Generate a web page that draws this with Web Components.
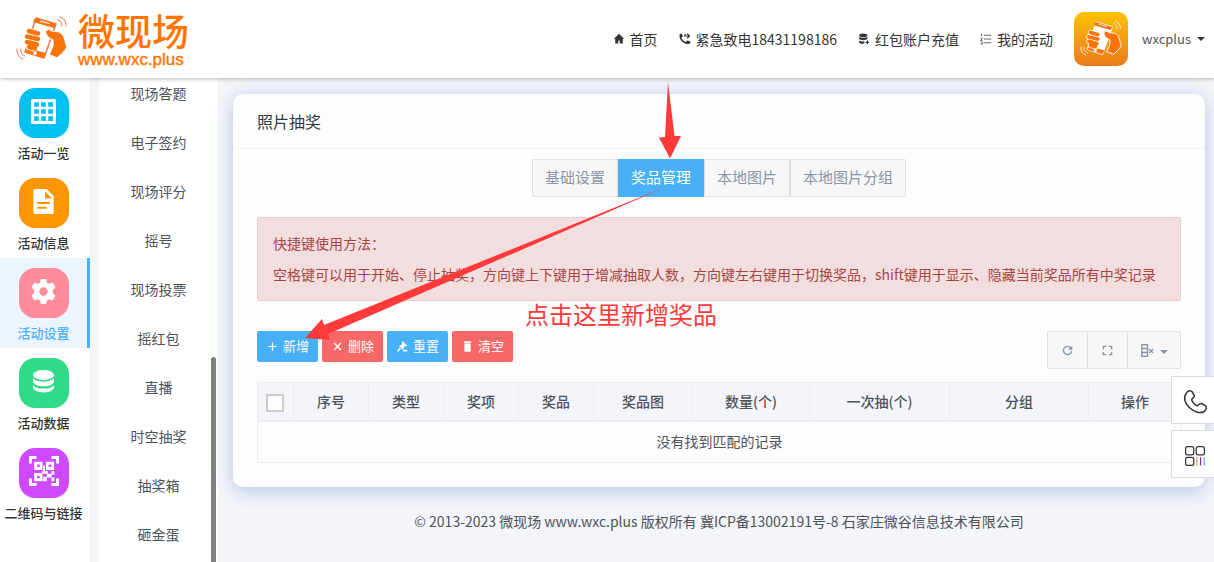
<!DOCTYPE html>
<html lang="zh-CN">
<head>
<meta charset="utf-8">
<title>照片抽奖</title>
<style>
  body { margin: 0; font: 14px/20px "Noto Sans CJK SC", sans-serif; color: #4d5259; background: #f4f5fa; }
</style>
</head>
<body>
<wxc-app></wxc-app>

<script>
const hand = (line, body, screen) => `
  <g stroke-linejoin="round" stroke-linecap="round">
    <path d="M20 2L40 8L28 42L9 36Z" fill="${screen}" stroke="${line}" stroke-width="1.400"/>
    <path d="M19 2L40 8L38 12L17 6Z" fill="${body}"/>
    <path d="M24 5L33 7.600" stroke="${screen}" stroke-width="1" fill="none"/>
    <path d="M11 32L30 37L28 42L9 36Z" fill="${body}"/>
    <circle cx="19" cy="37.300" r="1.800" fill="${screen}"/>
    <path d="M13 15L22 17.500M11 20.500L22 23M11 26L21 28.500M13 31L19 32.500" stroke="${screen}" stroke-width="6.400" fill="none"/>
    <path d="M13 15L22 17.500M11 20.500L22 23M11 26L21 28.500M13 31L19 32.500" stroke="${body}" stroke-width="4.600" fill="none"/>
    <path d="M30 18C28 14 32 12 36 15L43 16C49 18 49 26 51 32L46 38L41 42C37 40 35 39 33 39L37 30L37 24C34 23 32 22 30 18Z" fill="${body}" stroke="${screen}" stroke-width="1.200"/>
    <path d="M44 1C48 2 50 5 50 10M42 4C45 5 46 7 46 10M1 33C1 38 3 42 7 43M5 33C4 36 6 39 9 40" stroke="${line}" stroke-width="1" fill="none"/>
  </g>`;

const icons = {
  home: '<path d="M8 1L1 8h2v6h4v-4h2v4h4V8h2z"/>',
  call: '<path d="M1 1h3l1 4-2 1c1 3 3 5 6 6l2-2 4 1v3c-8 3-16-5-14-13z"/><path d="M7 4h7M11 1l3 3-3 3M8 1v3" fill="none" stroke="currentColor" stroke-width="1.500"/>',
  coins: '<ellipse cx="7" cy="3" rx="5.500" ry="2.500"/><path d="M1.500 5c2 2 9 2 11 0v3c-2 2-9 2-11 0zM1.500 10c2 1.500 5 1.500 7 1v3c-3 .5-7 0-7-1.500z"/><path d="M12.500 10v5M10 12.500h5" stroke="currentColor" stroke-width="1.500"/>',
  list: '<path d="M5 3h10M5 8h10M5 13h10M1 1.500h1v3M1 7h2l-2 3h2M1 12h2v3H1" fill="none" stroke="currentColor" stroke-width="1"/>',
  grid: '<path fill-rule="evenodd" d="M1 0h14q1 0 1 1v14q0 1-1 1H1q-1 0-1-1V1q0-1 1-1zM2 2v3h3V2zm4.500 0v3h3V2zM11 2v3h3V2zM2 6.500v3h3v-3zm4.500 0v3h3v-3zm4.500 0v3h3v-3zM2 11v3h3v-3zm4.500 0v3h3v-3zm4.500 0v3h3v-3z"/>',
  file: '<path fill-rule="evenodd" d="M3 0h7l4.500 4.500V15q0 1-1 1H3q-1.500 0-1.500-1V1q0-1 1.500-1zM9 1.500V6h4.500zM4 8.300v1.300h8V8.300zm0 3v1.300h6v-1.300z"/>',
  gear: '<path fill-rule="evenodd" d="M6.300 0h3.400l.5 2.300 1.300.8L13.800 2.300l1.900 3-1.700 1.700v2l1.700 1.700-1.900 3-2.300-.8-1.300.8-.5 2.300H6.300l-.5-2.300-1.300-.8-2.300.8-1.900-3L2 9V7L.3 5.300l1.900-3 2.300.8 1.300-.8zM8 5.300a2.700 2.700 0 1 0 0 5.400 2.700 2.700 0 0 0 0-5.400z"/>',
  data: '<ellipse cx="8" cy="3.800" rx="6.700" ry="3.200"/><path d="M1.300 5.500c1 3.400 12.400 3.400 13.400 0v2.800c-1 3.600-12.400 3.600-13.400 0zM1.300 10c1 3.400 12.400 3.400 13.400 0v2c-1 4-12.400 4-13.400 0z"/>',
  qr: '<path d="M.8 4V.8H4M12 .8h3.200V4M.8 12v3.200H4M12 15.200h3.200V12" fill="none" stroke="currentColor" stroke-width="1.600"/><path fill-rule="evenodd" d="M2.800 3h4.400v4.400H2.800zm1.500 1.500v1.400h1.400V4.500zM9 3h4.400v4.400H9zm1.500 1.500v1.400h1.400V4.500zM2.800 9h4.400v4.400H2.800zm1.500 1.500v1.400h1.400v-1.400zM7.500 5h1v3h-1zM7 8h3v1.500H7zM9.500 9.500h2.500v2H9.500zM12 8h1.500v2H12zM7.500 11h2v2.400h-2zM12 11.500h1.500v2H12z"/>',
  plus: '<path d="M8 2v12M2 8h12" stroke="currentColor" stroke-width="1.800"/>',
  close: '<path d="M3 3l10 10M13 3L3 13" stroke="currentColor" stroke-width="2"/>',
  gavel: '<path d="M8 0l7 7-2 1-1-1-3 3 1 1-1 2-6-6 1-1 1 .5L8 4 7 3z"/><path d="M5 10l-4 5M9 14h6" stroke="currentColor" stroke-width="2.500"/>',
  trash: '<path d="M3 1h10v1H3zM4 4h8v11H4z" stroke="currentColor"/>',
  refresh: '<path d="M13 4.500A6 6 0 1 0 14 9" fill="none" stroke="currentColor" stroke-width="2"/><path d="M15 1v6H9z"/>',
  full: '<path d="M2 6V2h4M10 2h4v4M14 10v4h-4M6 14H2v-4" fill="none" stroke="currentColor" stroke-width="2"/>',
  columns: '<path d="M1 1h7v14H1zM1 5.500h7M1 10.500h7M10 6l5 5M15 6l-5 5" fill="none" stroke="currentColor" stroke-width="1.700"/>',
  phone: '<path d="M2 2.500C3 .5 4.500 0 6 1l1.500 2.500C8 5 6 5.500 5.800 6.500 6 8 8 10 9.500 10.500 10.500 10 11 8.500 12.500 9l2.500 1.500c1.500 1.500 0 3-1 4C8 17.500-2 8 2 2.500z" fill="none" stroke="currentColor" stroke-width="1"/>',
  apps: '<rect x=".5" y=".5" width="6.500" height="6.500" rx="1.500" fill="none" stroke="currentColor"/><rect x="9" y=".5" width="6.500" height="6.500" rx="1.500" fill="none" stroke="currentColor"/><rect x=".5" y="9" width="6.500" height="6.500" rx="1.500" fill="none" stroke="currentColor"/><path d="M9.500 9v6.500" stroke="#d9a866"/><path d="M12.500 9v6.500" stroke="#803090"/><path d="M15.300 9v6.500" stroke="#6aa6e0"/>'
};

class Base extends HTMLElement {
  connectedCallback() {
    if (this.shadowRoot) return;
    this.attachShadow({ mode: 'open' }).innerHTML =
      '<style>*{box-sizing:border-box}a{color:inherit;text-decoration:none}</style>' + this.view();
  }
  attr(name) { return this.getAttribute(name) || ''; }
}

customElements.define('wxc-icon', class extends Base {
  view() {
    return `<style>:host{display:inline-flex;flex:none;width:12px;height:12px}svg{width:100%;height:100%;overflow:visible}</style>
      <svg viewBox="0 0 16 16" fill="currentColor" aria-hidden="true">${icons[this.attr('name')]}</svg>`;
  }
});

customElements.define('wxc-logo', class extends Base {
  view() {
    return `<style>
      :host{display:block;color:#ff7500}
      a{display:flex;align-items:center;gap:10px}
      svg{width:52px;height:46px;overflow:visible}
      .name{display:grid;font:500 37px/42px "Liberation Sans","Noto Sans CJK SC",sans-serif}
      small{font:17px/10px "Liberation Sans",sans-serif;-webkit-text-stroke:.4px #ff7500}
    </style>
    <a href="#"><svg viewBox="0 0 52 46" aria-hidden="true">
      ${hand('#f0743c', '#f9740a', '#fff')}</svg>
      <span class="name">微现场<small>www.wxc.plus</small></span></a>`;
  }
});

customElements.define('top-link', class extends Base {
  view() {
    return `<style>:host{display:block}a{display:flex;align-items:center;gap:5px}</style>
      <a href="#"><wxc-icon name="${this.attr('icon')}"></wxc-icon><span><slot></slot></span></a>`;
  }
});

customElements.define('top-bar', class extends Base {
  view() {
    return `<style>
      :host{display:flex;align-items:center;justify-content:space-between;height:78px;padding:0 9px 0 16px;
        background:#fff;color:#333;box-shadow:0 1px 4px rgba(0,0,0,.28);position:relative;z-index:2}
      nav{display:flex;align-items:center;gap:21px}
      .face{width:54px;height:54px;border-radius:10px;background:linear-gradient(#fcc205,#ea7a1a);display:grid;place-items:center}
      .face svg{width:42px;height:38px;overflow:visible}
      .user{display:flex;align-items:center;gap:14px}
      button{display:flex;align-items:center;gap:6px;padding:0;border:0;background:none;font:inherit;font-size:13px;color:#555}
      button::after{content:"";border:4px solid transparent;border-top-color:#333;border-bottom:0}
    </style>
    <wxc-logo></wxc-logo>
    <nav>
      <top-link icon="home">首页</top-link>
      <top-link icon="call">紧急致电18431198186</top-link>
      <top-link icon="coins">红包账户充值</top-link>
      <top-link icon="list">我的活动</top-link>
      <div class="user">
        <span class="face"><svg viewBox="0 0 52 46" aria-hidden="true">${hand('#fff', '#f97306', '#fff')}</svg></span>
        <button type="button">wxcplus</button>
      </div>
    </nav>`;
  }
});

customElements.define('side-item', class extends Base {
  view() {
    return `<style>
      :host{display:block;border-right:3px solid transparent;color:#333}
      :host([active]){background:#ecf5ff;border-color:#48b0f7;color:#48b0f7}
      a{display:grid;justify-items:center;gap:5px;padding:10px 0 5px;font-size:13px;font-weight:500;white-space:nowrap}
      .tile{display:grid;place-items:center;width:50px;height:50px;padding-bottom:4px;border-radius:16px;color:#fff;background:${this.attr('tint')}}
      wxc-icon{width:25px;height:25px}
      :host([wide]) wxc-icon{width:30px;height:30px}
    </style>
    <a href="#"><span class="tile"><wxc-icon name="${this.attr('icon')}"></wxc-icon></span><span><slot></slot></span></a>`;
  }
});

customElements.define('side-nav', class extends Base {
  view() {
    return `<style>:host{display:block;width:90px;background:#fff}</style>
    <nav>
      <side-item icon="grid" tint="#00c1f0">活动一览</side-item>
      <side-item icon="file" tint="#ff9500">活动信息</side-item>
      <side-item icon="gear" tint="#ff8c98" active>活动设置</side-item>
      <side-item icon="data" tint="#2fdb86">活动数据</side-item>
      <side-item icon="qr" tint="#cf4aff" wide>二维码与链接</side-item>
    </nav>`;
  }
});

customElements.define('sub-menu', class extends Base {
  view() {
    const items = ['现场答题', '电子签约', '现场评分', '摇号', '现场投票', '摇红包', '直播', '时空抽奖', '抽奖箱', '砸金蛋'];
    return `<style>
      :host{display:block;position:relative;width:119px;overflow:hidden;background:#fff}
      ul{list-style:none;margin:-9px 0 0;padding:0}
      a{display:block;line-height:49px;text-align:center}
      .thumb{position:absolute;right:2px;top:279px;bottom:-4px;width:5px;border-radius:3px;background:#808080}
    </style>
    <ul>${items.map(t => `<li><a href="#">${t}</a></li>`).join('')}</ul><div class="thumb"></div>`;
  }
});

customElements.define('tab-bar', class extends Base {
  view() {
    const tabs = ['基础设置', '奖品管理', '本地图片', '本地图片分组'];
    return `<style>
      :host{display:flex;justify-content:center}
      button{height:38px;padding:0 12px 2px;border:1px solid #e8dcde;background:#f7f7f7;color:#8b95a5;font:inherit;font-size:15px}
      button:first-of-type{border-radius:2px 0 0 2px}
      button:last-of-type{border-radius:0 2px 2px 0}
      button.on{background:#48b0f7;border-color:#48b0f7;color:#fff}
    </style>` + tabs.map((t, i) => `<button type="button" class="${i === 1 ? 'on' : ''}">${t}</button>`).join('');
  }
});

customElements.define('notice-box', class extends Base {
  view() {
    return `<style>
      :host{display:grid;gap:10px;padding:15px;border:1px solid #ebccd1;border-radius:2px;background:#f2dede;color:#a94442}
      ::slotted(p){margin:0;line-height:21px}
    </style><slot></slot>`;
  }
});

customElements.define('tool-button', class extends Base {
  view() {
    return `<style>
      :host{display:block}
      button{display:flex;align-items:center;gap:5px;height:31px;padding:0 9px 1px 10px;border:0;border-radius:2px;
        background:#48b0f7;color:#fff;font:inherit;font-size:13px;white-space:nowrap}
      :host([danger]) button{background:#f96868}
      wxc-icon{width:11px;height:11px}
    </style>
    <button type="button"><wxc-icon name="${this.attr('icon')}"></wxc-icon><span><slot></slot></span></button>`;
  }
});

customElements.define('table-tools', class extends Base {
  view() {
    return `<style>
      :host{display:flex}
      button{display:flex;align-items:center;justify-content:center;gap:6px;width:41px;height:38px;margin-left:-1px;padding:0;
        border:1px solid #e8dcde;background:#f7f7f7;color:#8b95a5}
      button:first-of-type{border-radius:2px 0 0 2px;margin:0}
      button:last-of-type{width:54px;border-radius:0 2px 2px 0}
      wxc-icon{width:11px;height:11px}
      .menu wxc-icon{width:13px;height:13px}
      .menu::after{content:"";margin-top:4px;border:4px solid transparent;border-top-color:#8b95a5;border-bottom:0}
    </style>
    <button type="button" aria-label="刷新"><wxc-icon name="refresh"></wxc-icon></button>
    <button type="button" aria-label="全屏"><wxc-icon name="full"></wxc-icon></button>
    <button type="button" aria-label="列" class="menu"><wxc-icon name="columns"></wxc-icon></button>`;
  }
});

customElements.define('prize-table', class extends Base {
  view() {
    const cols = [['序号', 75], ['类型', 75], ['奖项', 75], ['奖品', 75], ['奖品图', 99], ['数量(个)', 117], ['一次抽(个)', 140], ['分组', 139], ['操作', 93]];
    return `<style>
      :host{display:block}
      table{width:100%;table-layout:fixed;border-collapse:collapse;text-align:center}
      th,td{padding:0;border:1px solid #ebedf0}
      th{height:38px;font-weight:500;background:#f4f5fa;border-bottom-width:2px}
      td{height:42px;padding-bottom:2px}
      input{appearance:none;display:block;width:18px;height:18px;margin:3px auto 0 8px;border:2px solid #ccc;background:#fdfdfd}
    </style>
    <table>
      <colgroup><col style="width:36px">${cols.map(c => `<col style="width:${c[1]}px">`).join('')}</colgroup>
      <thead><tr><th><input type="checkbox" aria-label="全选"></th>${cols.map(c => `<th>${c[0]}</th>`).join('')}</tr></thead>
      <tbody><tr><td colspan="10">没有找到匹配的记录</td></tr></tbody>
    </table>`;
  }
});

customElements.define('page-card', class extends Base {
  view() {
    return `<style>
      :host{display:block;border-radius:10px;background:#fdfdfd;box-shadow:0 4px 18px rgba(110,145,205,.48)}
      h1{margin:0;padding:0 24px;font-size:16px;font-weight:400;line-height:54px;color:#313944;border-bottom:1px solid #f1f2f3}
      .body{padding:10px 24px 24px}
    </style>
    <h1>${this.attr('heading')}</h1><div class="body"><slot></slot></div>`;
  }
});

customElements.define('float-tools', class extends Base {
  view() {
    return `<style>
      :host{position:fixed;right:0;top:376px;z-index:3;display:grid;gap:6px}
      button{display:grid;place-items:center;width:43px;height:48px;padding:4px 0 0 4px;border:1px solid #ddd;border-right:0;background:#fff;color:#333}
      wxc-icon{width:24px;height:24px}
      .apps wxc-icon{width:20px;height:20px}
    </style>
    <button type="button" aria-label="电话"><wxc-icon name="phone"></wxc-icon></button>
    <button type="button" aria-label="二维码" class="apps"><wxc-icon name="apps"></wxc-icon></button>`;
  }
});

customElements.define('guide-marks', class extends Base {
  view() {
    return `<style>
      :host{position:absolute;left:87px;top:4px;z-index:2;width:412px;height:260px;pointer-events:none;color:#ff3a3a}
      svg{display:block;width:100%;height:100%}
      p{position:absolute;left:220px;top:215px;margin:0;font-size:24px;line-height:34px;white-space:nowrap}
    </style>
    <svg viewBox="305 82 412 260" fill="currentColor" aria-hidden="true">
      <path d="M668 82L674.500 136H681L670 158.500L659 137.500L665 137Z"/>
      <path d="M668 186L324 325L322 319L305 338L330 340L328 334Z"/>
    </svg>
    <p>点击这里新增奖品</p>`;
  }
});

customElements.define('wxc-app', class extends Base {
  view() {
    return `<style>
      :host{display:flex;flex-direction:column;height:100vh;overflow:hidden}
      .page{flex:1;min-height:0;display:flex;background:#f5f5f5}
      side-nav,sub-menu{flex:none}
      sub-menu{margin-left:9px}
      main{flex:1;min-width:0;position:relative;padding:16px 9px 0 15px;background:#f4f5fa}
      notice-box{margin-top:20px}
      .tools{display:flex;justify-content:space-between;align-items:flex-start;margin:30px 0 13px}
      .actions{display:flex;gap:4px}
      footer{padding-top:24px;text-align:center}
    </style>
    <top-bar></top-bar>
    <div class="page">
      <side-nav></side-nav>
      <sub-menu></sub-menu>
      <main>
        <page-card heading="照片抽奖">
          <tab-bar></tab-bar>
          <notice-box>
            <p>快捷键使用方法：</p>
            <p>空格键可以用于开始、停止抽奖，方向键上下键用于增减抽取人数，方向键左右键用于切换奖品，shift键用于显示、隐藏当前奖品所有中奖记录</p>
          </notice-box>
          <div class="tools">
            <div class="actions">
              <tool-button icon="plus">新增</tool-button>
              <tool-button icon="close" danger>删除</tool-button>
              <tool-button icon="gavel">重置</tool-button>
              <tool-button icon="trash" danger>清空</tool-button>
            </div>
            <table-tools></table-tools>
          </div>
          <prize-table></prize-table>
        </page-card>
        <footer>© 2013-2023 微现场 www.wxc.plus 版权所有 冀ICP备13002191号-8 石家庄微谷信息技术有限公司</footer>
        <guide-marks></guide-marks>
      </main>
    </div>
    <float-tools></float-tools>`;
  }
});
</script>
</body>
</html>
